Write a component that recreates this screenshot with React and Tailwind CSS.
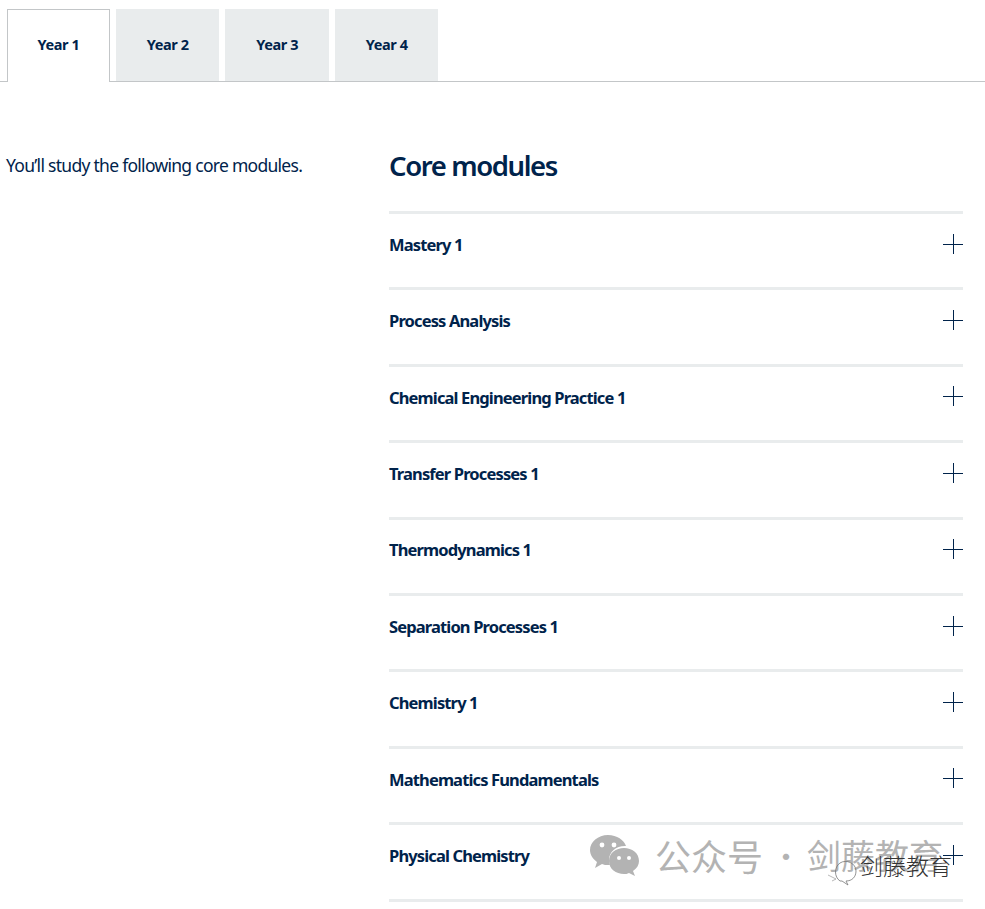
import React from 'react';

const years = ['Year 1', 'Year 2', 'Year 3', 'Year 4'];
const modules = [
  'Mastery 1',
  'Process Analysis',
  'Chemical Engineering Practice 1',
  'Transfer Processes 1',
  'Thermodynamics 1',
  'Separation Processes 1',
  'Chemistry 1',
  'Mathematics Fundamentals',
  'Physical Chemistry',
];

const PlusIcon = () => (
  <svg width="20" height="20" viewBox="0 0 20 20" className="mb-[2px] shrink-0" shapeRendering="crispEdges">
    <path d="M0 10H20M10 0V20" stroke="#00234b" strokeWidth="1" fill="none" />
  </svg>
);

const Watermark = () => (
  <div className="absolute left-[590px] top-[833px] h-[50px] w-[395px] pointer-events-none">
    <div className="flex items-center text-[#b3b3b3] font-['Noto_Sans_CJK_SC',sans-serif]">
      <svg width="50" height="42" viewBox="0 0 50 42">
        <path fill="#b3b3b3" d="M18 1C8 1 0 8 0 16c0 5 3 9 7 12l-2 6 7-4c2 1 4 1 6 1h2c-1-2-1-4-1-5 0-8 7-14 16-14h1C34 6 27 1 18 1z" />
        <circle cx="12" cy="11" r="2.4" fill="#fff" />
        <circle cx="24" cy="11" r="2.4" fill="#fff" />
        <path fill="#b3b3b3" d="M34 14c-8 0-15 5-15 13s7 13 15 13c2 0 3 0 5-1l6 3-2-5c4-3 6-6 6-10 0-8-7-13-15-13z" />
        <circle cx="29" cy="24" r="2" fill="#fff" />
        <circle cx="39" cy="24" r="2" fill="#fff" />
      </svg>
      <span className="ml-[15px] w-[110px] text-[36px] leading-[44px] whitespace-nowrap">公众号</span>
      <span className="w-[42px] text-center text-[30px] leading-[44px]">·</span>
      <span className="text-[34px] leading-[44px] whitespace-nowrap">剑藤教育</span>
    </div>
    <div className="absolute left-[236px] top-[17px] flex items-start">
      <svg width="34" height="32" viewBox="0 0 34 32" className="mt-[7px]">
        <path d="M14 24 C8 20 8 10 14 6 C20 2 30 6 30 14 C30 20 26 24 20 24 L22 28 L16 24 Z" fill="none" stroke="#777" strokeWidth="0.8" />
        <path d="M2 18 L10 22 L6 24" fill="none" stroke="#999" strokeWidth="0.7" />
      </svg>
      <span className="text-[23px] leading-[30px] text-[#333] whitespace-nowrap font-['Noto_Sans_CJK_SC',sans-serif] font-extralight">剑藤教育</span>
    </div>
  </div>
);

export default function App() {
  return (
    <div className="relative h-[909px] overflow-hidden bg-white text-[#00234b] font-['Noto_Sans',sans-serif]">
      <div className="flex h-[82px] gap-[5.9px] border-b border-[#c3c6c8] pl-[7px] pt-[9px]">
        {years.map((year, i) => (
          <div
            key={year}
            className={
              i === 0
                ? 'flex h-[73px] w-[103px] items-center justify-center border border-b-0 border-[#c3c6c8] bg-white pb-[2px] text-[14.5px] font-bold tracking-[-0.4px]'
                : 'flex h-[72px] w-[103.6px] items-center justify-center bg-[#e9eced] pb-[1px] text-[14.5px] font-bold tracking-[-0.4px]'
            }
          >
            {year}
          </div>
        ))}
      </div>

      <div className="flex pl-[6px] pr-[22px] pt-[63px]">
        <p className="w-[383px] pt-[8px] text-[17.5px] leading-[24px] tracking-[-0.72px]">You’ll study the following core modules.</p>
        <div className="flex-1">
          <h2 className="h-[66px] text-[27.5px] font-semibold leading-[42px] tracking-[-1.4px]">Core modules</h2>
          {modules.map((name) => (
            <div key={name} className="flex h-[76.4px] items-center justify-between border-t-[3.5px] border-[#e9eced] pb-[12px]">
              <span className="mt-[1px] text-[16.5px] font-bold tracking-[-0.86px]">{name}</span>
              <PlusIcon />
            </div>
          ))}
          <div className="h-[3.5px] bg-[#e9eced]" />
        </div>
      </div>

      <Watermark />
    </div>
  );
}
